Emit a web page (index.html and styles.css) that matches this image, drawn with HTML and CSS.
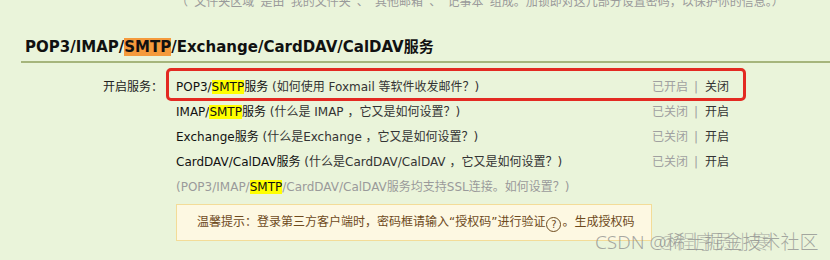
FILE: index.html
```html
<!DOCTYPE html>
<html lang="zh-CN">
<head>
<meta charset="utf-8">
<title>POP3/IMAP/SMTP 服务设置</title>
<link rel="stylesheet" href="styles.css">
</head>
<body>
<div class="page">
  <div class="intro">（“文件夹区域”是由“我的文件夹”、“其他邮箱”、“记事本”组成。加锁即对这几部分设置密码，以保护你的信息。）</div>

  <h2 class="section-title">POP3/IMAP/<span class="hl-orange">SMTP</span>/Exchange/CardDAV/CalDAV服务</h2>

  <div class="services">
    <div class="label">开启服务：</div>
    <div class="list">
      <div class="row row-marked">
        <span class="name">POP3/<span class="hl-yellow">SMTP</span>服务 <span class="help">(如何使用 Foxmail 等软件收发邮件？)</span></span>
        <span class="status"><span class="state">已开启</span><span class="sep">|</span><span class="action">关闭</span></span>
        <span class="mark"></span>
      </div>
      <div class="row">
        <span class="name">IMAP/<span class="hl-yellow">SMTP</span>服务 <span class="help">(什么是 IMAP ，它又是如何设置？)</span></span>
        <span class="status"><span class="state">已关闭</span><span class="sep">|</span><span class="action">开启</span></span>
      </div>
      <div class="row">
        <span class="name">Exchange服务 <span class="help">(什么是Exchange ，它又是如何设置？)</span></span>
        <span class="status"><span class="state">已关闭</span><span class="sep">|</span><span class="action">开启</span></span>
      </div>
      <div class="row">
        <span class="name">CardDAV/CalDAV服务 <span class="help">(什么是CardDAV/CalDAV ，它又是如何设置？)</span></span>
        <span class="status"><span class="state">已关闭</span><span class="sep">|</span><span class="action">开启</span></span>
      </div>
      <div class="note">(POP3/IMAP/<span class="hl-yellow">SMTP</span>/CardDAV/CalDAV服务均支持SSL连接。如何设置？)</div>
      <div class="tip">温馨提示：登录第三方客户端时，密码框请输入“授权码”进行验证<span class="qmark">?</span>。生成授权码</div>
    </div>
  </div>

  <div class="watermark"><span class="wm-a">CSDN @稀土掘金技术社区</span><span class="wm-b">@程序员小寒</span></div>
</div>
</body>
</html>
```

FILE: styles.css
```css
html, body {
  margin: 0;
  padding: 0;
  background: #eaf4da;
}

.page {
  position: relative;
  width: 830px;
  height: 260px;
  overflow: hidden;
  font-family: "DejaVu Sans", "Noto Sans CJK SC", sans-serif;
  font-size: 12px;
  color: #222;
}

.intro {
  margin: -7px 0 0 0;
  padding-left: 176px;
  height: 18px;
  line-height: 18px;
  color: #9a9a9a;
  white-space: nowrap;
}

.section-title {
  margin: 26px 0 0 21px;
  padding: 0 0 4px 4px;
  font-size: 15px;
  line-height: 20px;
  font-weight: bold;
  color: #111;
  border-bottom: 2px solid #a6b57c;
  white-space: nowrap;
}

.hl-orange {
  background: #f59a3c;
}

.hl-yellow {
  background: #ffff00;
  color: #111;
}

.services {
  display: flex;
  margin-top: 12px;
}

.label {
  width: 163px;
  text-align: right;
  line-height: 25px;
  color: #222;
  flex: none;
}

.list {
  margin-left: 13px;
  width: 554px;
}

.row {
  position: relative;
  display: flex;
  justify-content: space-between;
  line-height: 25px;
  height: 25px;
  white-space: nowrap;
}

.name {
  color: #111;
}

.help {
  color: #333;
}

.status {
  display: flex;
  width: 78px;
}

.state {
  color: #a0a0a0;
}

.sep {
  color: #a0a0a0;
  margin: 0 7px 0 6px;
}

.action {
  color: #333;
}

.mark {
  position: absolute;
  left: -10px;
  right: -16px;
  top: -7px;
  bottom: -1px;
  border: 3px solid #e32a22;
  border-radius: 5px;
}

.note {
  line-height: 25px;
  height: 25px;
  color: #9a9a9a;
  white-space: nowrap;
}

.tip {
  margin-top: 4px;
  width: 434px;
  height: 35px;
  line-height: 35px;
  padding: 0 20px;
  background: #fdf8e2;
  border: 1px solid #f3dc98;
  color: #6e4a1c;
  white-space: nowrap;
}

.qmark {
  display: inline-block;
  width: 13px;
  height: 13px;
  line-height: 13px;
  border: 1px solid #6e4a1c;
  border-radius: 50%;
  text-align: center;
  font-size: 10px;
  margin: 0 1px;
  vertical-align: -2px;
}

.watermark {
  position: absolute;
  left: 595px;
  top: 230px;
  font-size: 19px;
  line-height: 24px;
  color: rgba(140, 140, 140, 0.75);
  font-family: "Noto Sans", "Noto Sans CJK SC", sans-serif;
  font-weight: 300;
  white-space: nowrap;
}

.wm-b {
  position: absolute;
  left: 64px;
  top: 0;
  color: rgba(140, 140, 140, 0.55);
}
```
